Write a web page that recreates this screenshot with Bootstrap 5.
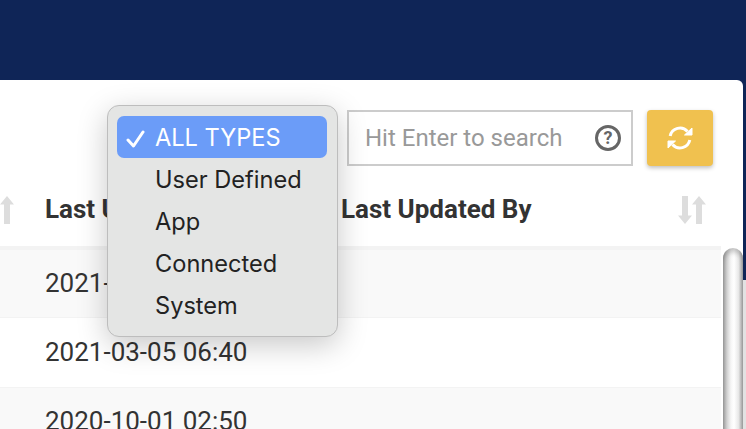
<!DOCTYPE html>
<html lang="en">
<head>
  <meta charset="UTF-8" />
  <title>Types</title>
  <meta name="viewport" content="width=device-width, initial-scale=1.0" />
  <link rel="stylesheet" href="https://cdn.jsdelivr.net/npm/bootstrap@5.3.0/dist/css/bootstrap.min.css" />
  <style>
    html, body { height: 429px; overflow: hidden; }
    body {
      background: linear-gradient(#0f2557 280px, #e2e2e2 280px);
      font-family: Roboto, sans-serif;
      color: #333;
    }
    .top-band { height: 80px; }
    .panel {
      position: relative;
      width: 743px;
      height: 349px;
      background: #fff;
      border-radius: 0 6px 0 0;
      overflow: hidden;
    }
    .tool-row { padding: 30px 30px 0 0; height: 88px; }
    .search-box {
      width: 286px;
      height: 56px;
      border: 2px solid #ccc;
      padding: 0 10px 0 16px;
    }
    .search-box input {
      border: 0;
      outline: 0;
      padding: 0;
      min-width: 0;
      font-size: 24px;
      color: #333;
      background: transparent;
    }
    .search-box input::placeholder { color: #999; opacity: 1; }
    .help-mark {
      width: 26px;
      height: 26px;
      border: 3px solid #666;
      border-radius: 50%;
      color: #666;
      font-size: 18px;
      font-weight: 700;
      line-height: 20px;
      text-align: center;
    }
    .refresh-btn {
      width: 66px;
      height: 56px;
      margin-left: 14px;
      padding: 0;
      border: 0;
      border-radius: 4px;
      background: #f0c14f;
      box-shadow: 0 2px 4px rgba(0,0,0,.25);
    }
    .table-area { width: 743px; }
    .data-table { width: 721px; table-layout: fixed; margin: 0; }
    .data-table th, .data-table td {
      border: 0;
      padding: 0;
      font-size: 26px;
      color: #333;
      vertical-align: middle;
      box-shadow: none;
    }
    .data-table thead tr { height: 80px; }
    .data-table thead th { border-bottom: 4px solid #f3f3f3; font-weight: 700; padding-top: 5px; }
    .data-table tbody tr { height: 69.5px; border-bottom: 1px solid #f3f3f3; }
    .data-table tbody tr:nth-child(odd) td { background: #f9f9f9; }
    .sort-wrap { padding-right: 15px; }
    .scroll-track { width: 22px; padding: 80px 0 0 2px; }
    .scroll-thumb {
      height: 200px;
      border-radius: 10px 10px 0 0;
      background: linear-gradient(90deg, #a6a6a6 0%, #cfcfcf 18%, #f6f6f6 40%, #fff 55%, #e8e8e8 78%, #a9a9a9 100%);
      box-shadow: inset 0 4px 5px rgba(0,0,0,.22);
    }
    .type-menu {
      position: absolute;
      left: 107px;
      top: 25px;
      width: 231px;
      height: 232px;
      padding: 10px 10px 10px 9px;
      background: #e4e5e4;
      border: 1px solid #bdbdbd;
      border-radius: 12px;
      box-shadow: 0 8px 30px rgba(0,0,0,.22);
      font-family: Inter, sans-serif;
      font-size: 23.6px;
      color: #222;
    }
    .type-item {
      position: relative;
      height: 42px;
      line-height: 44px;
      padding-left: 38px;
      border-radius: 7px;
      white-space: nowrap;
    }
    .type-item.picked { background: #6b9cf8; color: #fff; }
    .type-item svg { position: absolute; left: 9px; top: 14px; }
  </style>
</head>
<body>
  <div class="top-band"></div>

  <div class="panel">
    <!-- search + refresh -->
    <div class="tool-row d-flex justify-content-end">
      <div class="search-box d-flex align-items-center">
        <input type="text" class="flex-grow-1 w-100" placeholder="Hit Enter to search" />
        <span class="help-mark flex-shrink-0">?</span>
      </div>
      <button type="button" class="refresh-btn d-flex align-items-center justify-content-center">
        <svg width="26" height="26" viewBox="0 0 26 26" fill="#fff" stroke="#fff"><path d="M3.2 11A10 10 0 0 1 20.5 6.5" fill="none" stroke-width="3"/><path d="M25 3V10H17.5Z" stroke-width="1" stroke-linejoin="round"/><path d="M22.8 15A10 10 0 0 1 5.5 19.5" fill="none" stroke-width="3"/><path d="M1 23V16H8.5Z" stroke-width="1" stroke-linejoin="round"/></svg>
      </button>
    </div>

    <!-- table and the scrollbar next to it -->
    <div class="table-area d-flex">
      <table class="table data-table">
        <colgroup><col style="width:45px" /><col style="width:296px" /><col /></colgroup>
        <thead>
          <tr>
            <th>
              <svg class="d-block" width="14" height="28" viewBox="0 0 14 28" fill="#ddd"><path d="M7 0 14 8.5H10V28H4V8.5H0Z"/></svg>
            </th>
            <th>Last Updated</th>
            <th>
              <div class="d-flex justify-content-between align-items-center sort-wrap">
                <span>Last Updated By</span>
                <svg width="28" height="28" viewBox="0 0 28 28" fill="#ddd"><path d="M4 0H10V19.5H14L7 28 0 19.5H4Z"/><path d="M21 0 28 8.5H24V28H18V8.5H14Z"/></svg>
              </div>
            </th>
          </tr>
        </thead>
        <tbody>
          <tr><td></td><td>2021-03-05 06:40</td><td></td></tr>
          <tr><td></td><td>2021-03-05 06:40</td><td></td></tr>
          <tr><td></td><td>2020-10-01 02:50</td><td></td></tr>
        </tbody>
      </table>
      <div class="scroll-track"><div class="scroll-thumb"></div></div>
    </div>

    <!-- open select menu -->
    <div class="type-menu">
      <div class="type-item picked">
        <svg width="20" height="18" viewBox="0 0 20 18" fill="none" stroke="#fff" stroke-width="3" stroke-linecap="round" stroke-linejoin="round"><path d="M2 10 7.5 16 17 2"/></svg>ALL TYPES
      </div>
      <div class="type-item">User Defined</div>
      <div class="type-item">App</div>
      <div class="type-item">Connected</div>
      <div class="type-item">System</div>
    </div>
  </div>

  <script src="https://cdn.jsdelivr.net/npm/bootstrap@5.3.0/dist/js/bootstrap.bundle.min.js"></script>
</body>
</html>
